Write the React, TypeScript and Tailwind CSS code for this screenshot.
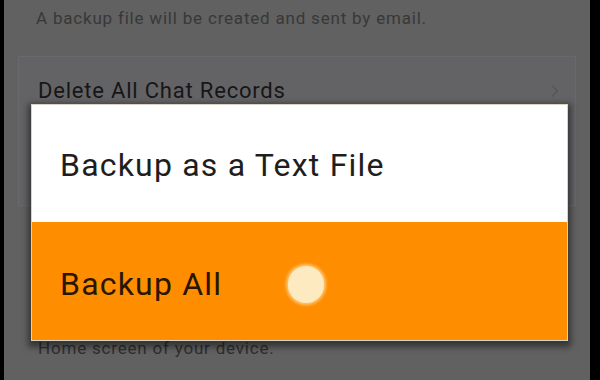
import { ChevronRight } from "lucide-react";

export default function App() {
  return (
    <div
      className="flex h-[380px] w-[600px] overflow-hidden bg-black"
      style={{ fontFamily: "Roboto, 'Noto Sans', sans-serif" }}
    >
      <div className="relative ml-[4px] mr-[10px] flex-1 bg-[#616161]">
        {/* background settings list, dimmed */}
        <div className="flex h-full flex-col">
          <p className="pl-[32px] pt-[7px] text-[17px] leading-[22px] tracking-[0.8px] text-[#383838]">
            A backup file will be created and sent by email.
          </p>
          <div className="mx-[14px] mt-[27px] flex h-[150px] items-start justify-between border border-[#68696d] bg-[#636365] pl-[19px] pr-[10px] pt-[20px]">
            <span className="text-[22px] leading-[28px] tracking-[0.8px] text-[#161616]">Delete All Chat Records</span>
            <ChevronRight className="mt-[4px] h-[20px] w-[20px] text-[#555]" strokeWidth={1.5} />
          </div>
          <p className="pl-[34px] pt-[131px] text-[17px] leading-[22px] tracking-[0.8px] text-[#2e2e2e]">
            Home screen of your device.
          </p>
        </div>

        {/* dialog */}
        <div className="absolute left-[27px] top-[104px] w-[537px] border border-[#d9d3c6] shadow-[0_3px_6px_3px_rgba(0,0,0,0.45)]">
          <div className="flex h-[117px] items-center bg-white pl-[28px] pt-[2px]">
            <span className="text-[32px] leading-[38px] tracking-[1.2px] text-[#1e1e1e]">Backup as a Text File</span>
          </div>
          <div className="flex h-[118px] items-center bg-[#ff8d00] pl-[28px] pt-[6px]">
            <span className="text-[32px] leading-[38px] tracking-[1.2px] text-[#2a1600]">Backup All</span>
            <span className="ml-[66px] h-[37px] w-[36px] rounded-full bg-[#fdeac0] shadow-[0_0_3px_2px_rgba(255,236,190,0.6)]" />
          </div>
        </div>
      </div>
    </div>
  );
}
